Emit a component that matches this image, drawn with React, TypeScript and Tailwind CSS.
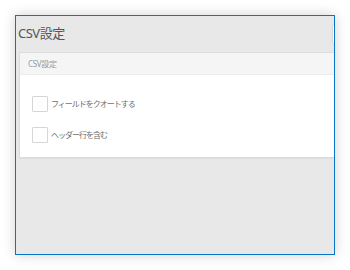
const font = { fontFamily: '"Noto Sans", "Noto Sans CJK JP", sans-serif' };

function Checkbox({ label }: { label: string }) {
  return (
    <label className="flex items-center gap-[3px]">
      <span className="w-4 h-4 shrink-0 bg-white border border-[#d6d6d6] rounded-[1px]" />
      <span className="text-[8px] leading-none tracking-[-1px] text-[#6f6f6f]">{label}</span>
    </label>
  );
}

export default function App() {
  return (
    <div className="w-[350px] h-[270px] bg-white p-[15px]" style={font}>
      <div className="w-[320px] h-[240px] border border-[#0a74c9] bg-[#e8e8e8] overflow-hidden flex flex-col shadow-[0_0_12px_rgba(0,0,0,0.18)]">
        <div className="h-[36px] shrink-0 flex items-center pl-[2px]">
          <h1 className="text-[13px] text-[#555] tracking-[-0.5px]">CSV設定</h1>
          <div className="ml-auto -mr-[40px] w-[42px] h-[20px] shrink-0 bg-white border border-[#d8d8d8] rounded-[2px]" />
        </div>
        <div className="ml-[3px] w-[330px] shrink-0 border border-[#dcdcdc] bg-white shadow-[0_1px_1px_rgba(0,0,0,0.04)]">
          <div className="h-[22px] flex items-center px-2 bg-[#f5f5f5] border-b border-[#ececec]">
            <span className="text-[8px] text-[#999] tracking-[-0.3px]">CSV設定</span>
          </div>
          <div className="pl-[12px] pt-[21px] pb-[14px] flex flex-col gap-[15px]">
            <Checkbox label="フィールドをクオートする" />
            <Checkbox label="ヘッダー行を含む" />
          </div>
        </div>
      </div>
    </div>
  );
}
